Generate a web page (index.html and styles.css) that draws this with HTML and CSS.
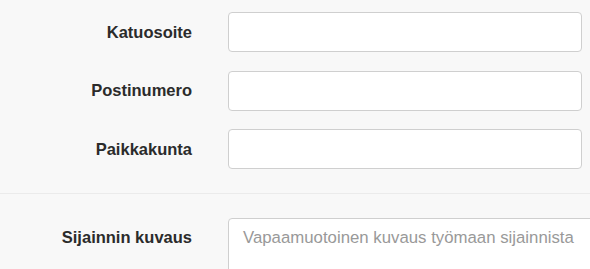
FILE: index.html
```html
<!DOCTYPE html>
<html lang="fi">
<head>
<meta charset="utf-8">
<link rel="stylesheet" href="styles.css">
</head>
<body>
<form class="form">
  <div class="group">
    <label class="label" for="katu">Katuosoite</label>
    <input class="input" id="katu" type="text">
  </div>
  <div class="group">
    <label class="label" for="posti">Postinumero</label>
    <input class="input" id="posti" type="text">
  </div>
  <div class="group">
    <label class="label" for="paikka">Paikkakunta</label>
    <input class="input" id="paikka" type="text">
  </div>
  <div class="section">
    <div class="group group-top">
      <label class="label label-top" for="kuvaus">Sijainnin kuvaus</label>
      <textarea class="textarea" id="kuvaus" placeholder="Vapaamuotoinen kuvaus työmaan sijainnista"></textarea>
    </div>
  </div>
</form>
</body>
</html>
```

FILE: styles.css
```css
html, body {
  margin: 0;
  padding: 0;
  background: #f8f8f8;
  overflow: hidden;
}
body {
  font-family: "Liberation Sans", Arial, sans-serif;
  color: #333;
}
.form {
  padding-top: 12px;
  display: flex;
  flex-direction: column;
  gap: 18.5px;
}
.group {
  display: grid;
  grid-template-columns: 192px 354px;
  column-gap: 36px;
  align-items: center;
}
.label {
  text-align: right;
  font-weight: bold;
  font-size: 16.5px;
  color: #2b2b2b;
}
.input {
  box-sizing: border-box;
  height: 40px;
  width: 354px;
  margin: 0;
  border: 1px solid #cfcfcf;
  border-radius: 4px;
  background: #fff;
  font-family: inherit;
  font-size: 17px;
  padding: 6px 14px;
}
.section {
  margin-top: 5.5px;
  border-top: 1px solid #ebebeb;
  padding-top: 24px;
}
.group-top {
  align-items: start;
  grid-template-columns: 192px 400px;
}
.label-top {
  padding-top: 10px;
}
.textarea {
  box-sizing: border-box;
  width: 400px;
  height: 90px;
  margin: 0;
  border: 1px solid #cfcfcf;
  border-radius: 4px;
  background: #fff;
  font-family: inherit;
  font-size: 16.8px;
  line-height: 1.42857;
  padding: 7px 14px;
  resize: none;
  color: #555;
}
.textarea::placeholder {
  color: #999;
  opacity: 1;
}
```
